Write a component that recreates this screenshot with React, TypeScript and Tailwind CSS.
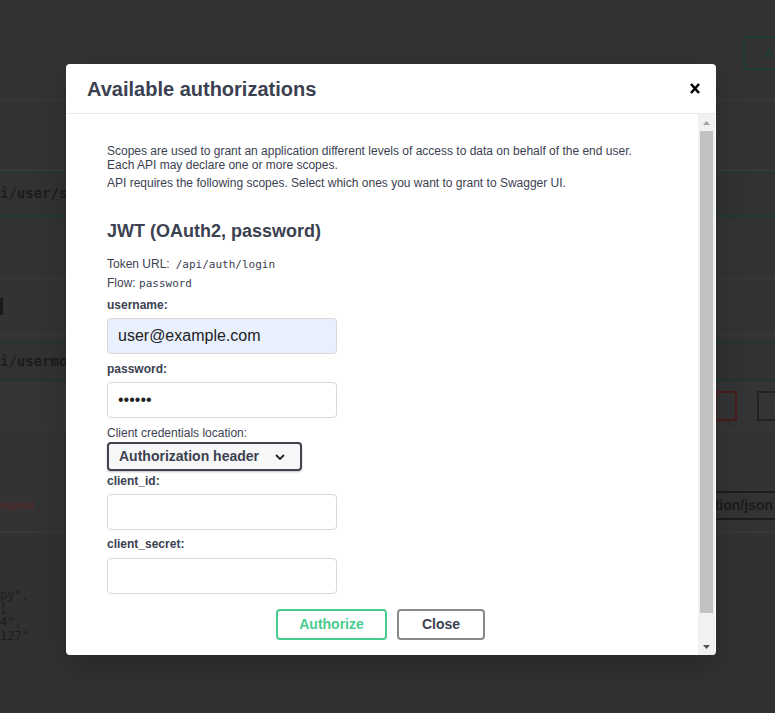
import React from "react";

const label = "block leading-[14px] font-bold";
const input =
  "block w-[230px] h-[36px] px-[10px] border border-[#d9d9d9] rounded-[4px] text-[16px] text-[#222] outline-none";

function Backdrop() {
  return (
    <div className="w-full h-full flex flex-col bg-[#333333] overflow-hidden font-['DejaVu_Sans_Mono',monospace]">
      {/* top bar w/ authorize button */}
      <div className="h-[101px] border-b border-[#3a3a3a] flex justify-end items-start pt-[36px]">
        <div className="w-[32px] h-[34px] border-y-2 border-l-2 border-[#1d3b2c] rounded-l-[4px] flex items-center justify-end pr-[1px] text-[14px] font-bold text-[#1d3b2c] font-['Liberation_Sans',Arial,sans-serif]">
          A
        </div>
      </div>
      <div className="h-[70px] border-b border-[#3a3a3a]" />
      <div className="h-[46px] border-b-2 border-[#1f382b] bg-[#313332] flex items-center text-[14px] font-bold text-[#1c1c1c] border-t border-t-[#22392d]">
        i/user/session
      </div>
      <div className="h-[62px] border-b border-[#3a3a3a]" />
      <div className="h-[56px] border-b border-[#3a3a3a] flex items-center">
        <div className="w-[3px] h-[17px] bg-[#1a1a1a]" />
      </div>
      <div className="h-[6px]" />
      <div className="h-[40px] border-y-2 border-[#1f382b] bg-[#313332] flex items-center text-[14px] font-bold text-[#1c1c1c]">
        i/usermodel
      </div>
      <div className="h-[50px] border-b border-[#3a3a3a] flex justify-end items-center gap-[20px] bg-[#343434]">
        <div className="w-[22px] h-[30px] border-2 border-[#4a1c1c]" />
        <div className="w-[18px] h-[30px] border-y-2 border-l-2 border-[#222]" />
      </div>
      <div className="h-[102px] border-b border-[#3a3a3a] flex justify-between items-start">
        <div className="mt-[67px] text-[10px] text-[#5a2626] font-['Liberation_Sans',Arial,sans-serif]">
          equired
        </div>
        <div className="mt-[60px] h-[29px] w-[76px] border-y-2 border-l-2 border-[#1c1c1c] rounded-l-[4px] flex items-center justify-end pr-[2px] text-[14px] font-bold text-[#1c1c1c] font-['Liberation_Sans',Arial,sans-serif]">
          tion/json
        </div>
      </div>
      <div className="flex-1 bg-[#303130] pt-[56px] text-[12px] leading-[13.5px] text-[#1e1e1e]">
        <div>py",</div>
        <div>[</div>
        <div>4",</div>
        <div>127"</div>
      </div>
    </div>
  );
}

function Scrollbar() {
  return (
    <div className="w-[17px] shrink-0 bg-[#f1f1f1] flex flex-col">
      <div className="h-[17px] flex items-center justify-center">
        <svg width="7" height="4" viewBox="0 0 7 4">
          <path d="M0 4 L3.5 0 L7 4 Z" fill="#a3a3a3" />
        </svg>
      </div>
      <div className="h-[482px] mx-[2px] bg-[#c1c1c1]" />
      <div className="flex-1" />
      <div className="h-[17px] flex items-center justify-center">
        <svg width="7" height="4" viewBox="0 0 7 4">
          <path d="M0 0 L7 0 L3.5 4 Z" fill="#505050" />
        </svg>
      </div>
    </div>
  );
}

export default function App() {
  return (
    <div className="relative w-[775px] h-[713px] overflow-hidden font-['Liberation_Sans',Arial,sans-serif]">
      <Backdrop />

      {/* Modal */}
      <div className="absolute left-[66px] top-[64px] w-[650px] h-[591px] bg-white rounded-[4px] shadow-[0_10px_30px_rgba(0,0,0,0.2)] flex flex-col overflow-hidden">
        <div className="h-[50px] shrink-0 border-b border-[#ebebeb] flex items-center justify-between pl-[21px] pr-[16px]">
          <h3 className="text-[20px] leading-6 font-bold text-[#3b4151]">Available authorizations</h3>
          <button className="w-[10px] h-[11px]">
            <svg viewBox="0 0 10 11" width="10" height="11">
              <path d="M1 1 L9 10 M9 1 L1 10" stroke="#000" strokeWidth="2.6" />
            </svg>
          </button>
        </div>

        <div className="flex-1 flex min-h-0 pr-[1px]">
          <div className="flex-1 overflow-hidden">
            <div className="pl-[41px] pr-[44px] pt-[30px] pb-[41px] text-[12px] text-[#3b4151]">
              <p className="leading-[14px]">
                Scopes are used to grant an application different levels of access to data on behalf of the end user.
                <br />
                Each API may declare one or more scopes.
              </p>
              <p className="mt-[4px] leading-[14px]">
                API requires the following scopes. Select which ones you want to grant to Swagger UI.
              </p>

              <h4 className="mt-[30px] text-[18px] leading-[22px] font-bold">JWT (OAuth2, password)</h4>

              <p className="mt-[15px] h-[14px] leading-[14px]">
                Token URL:
                <code className="ml-[6px] text-[11px] leading-[14px] font-['DejaVu_Sans_Mono',monospace]">/api/auth/login</code>
              </p>
              <p className="mt-[5px] h-[14px] leading-[14px]">
                Flow: <code className="text-[11px] leading-[14px] font-['DejaVu_Sans_Mono',monospace]">password</code>
              </p>

              <label className={label + " mt-[8px]"}>username:</label>
              <input className={input + " mt-[6px] bg-[#e8f0fe]"} defaultValue="user@example.com" readOnly />

              <label className={label + " mt-[8px]"}>password:</label>
              <input type="password" className={input + " mt-[6px] bg-white"} defaultValue="secret" readOnly />

              <label className="block leading-[14px] mt-[8px]">Client credentials location:</label>
              <div className="mt-[2px] w-[195px] h-[29px] border-2 border-[#41444e] rounded-[4px] bg-[#f7f7f7] shadow-[0_1px_2px_rgba(0,0,0,0.25)] flex items-center justify-between pl-[10px] pr-[15px]">
                <span className="text-[14px] font-bold text-[#3b4151]">Authorization header</span>
                <svg width="10" height="6" viewBox="0 0 10 6">
                  <path d="M1 1 L5 5 L9 1" fill="none" stroke="#222" strokeWidth="1.8" />
                </svg>
              </div>

              <label className={label + " mt-[3px]"}>client_id:</label>
              <input className={input + " mt-[6px] bg-white"} readOnly />

              <label className={label + " mt-[7px]"}>client_secret:</label>
              <input className={input + " mt-[7px] bg-white"} readOnly />

              <div className="mt-[15px] flex justify-center gap-[10px]">
                <button className="w-[111px] h-[31px] border-2 border-[#49cc90] rounded-[4px] text-[14px] font-bold text-[#49cc90]">
                  Authorize
                </button>
                <button className="w-[88px] h-[31px] border-2 border-[#888888] rounded-[4px] text-[14px] font-bold text-[#3b4151]">
                  Close
                </button>
              </div>
            </div>
          </div>
          <Scrollbar />
        </div>
      </div>
    </div>
  );
}
